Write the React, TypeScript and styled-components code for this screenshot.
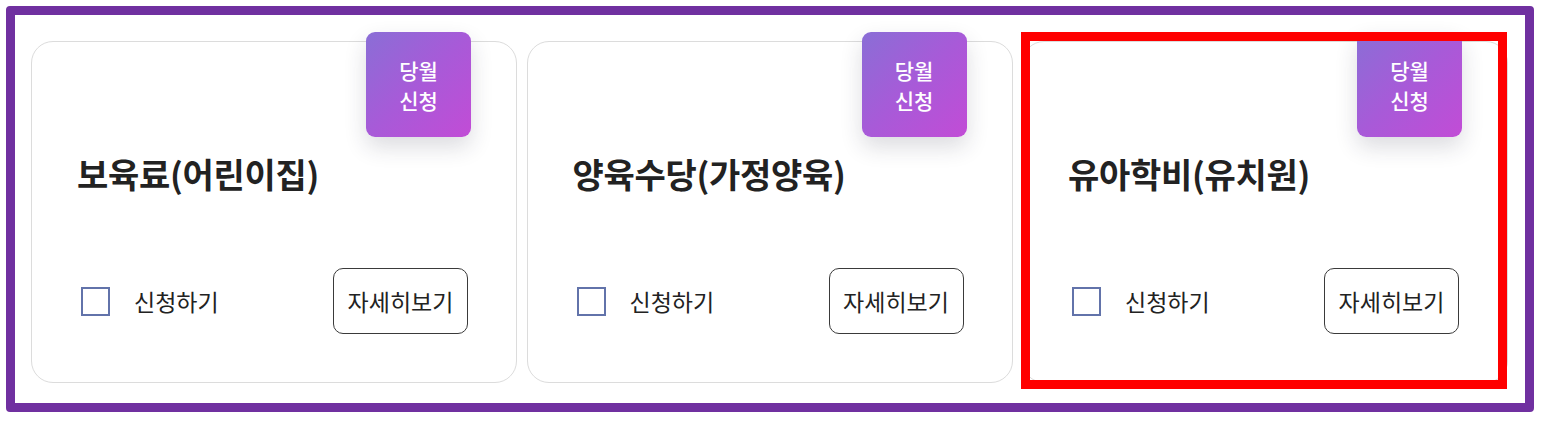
import React from "react";
import styled, { createGlobalStyle } from "styled-components";

const GlobalStyle = createGlobalStyle`
  html, body {
    margin: 0;
    padding: 0;
    background: #ffffff;
    font-family: "Noto Sans CJK KR", "Noto Sans", sans-serif;
    color: #222222;
  }
  *, *::before, *::after { box-sizing: border-box; }
`;

const Frame = styled.div`
  margin: 6px;
  width: 1528px;
  height: 406px;
  border: 9px solid #7030a0;
  border-radius: 4px;
  padding: 26px 17px 20px 16px;
  display: grid;
  grid-template-columns: repeat(3, 1fr);
  column-gap: 9.5px;
`;

const Card = styled.div<{ $highlighted?: boolean }>`
  position: relative;
  height: 342px;
  border: 1px solid #dcdcdc;
  border-radius: 22px;
  background: #ffffff;
  display: flex;
  flex-direction: column;
  justify-content: space-between;
  padding: 110px 48px 48px 45px;

  ${({ $highlighted }) =>
    $highlighted &&
    `
    &::after {
      content: "";
      position: absolute;
      left: -2px;
      top: -10px;
      width: 486px;
      height: 357px;
      border: 9px solid #ff0000;
      pointer-events: none;
    }
  `}
`;

const Badge = styled.div`
  position: absolute;
  top: -10px;
  right: 45px;
  width: 105px;
  height: 105px;
  border-radius: 9px;
  background: linear-gradient(135deg, #8a6ed6 0%, #a85ad8 50%, #c24cd6 100%);
  box-shadow: 0 10px 22px rgba(40, 40, 60, 0.16);
  color: #ffffff;
  display: flex;
  align-items: center;
  justify-content: center;
  text-align: center;
  font-size: 21px;
  line-height: 30px;
  font-weight: 500;
`;

const Title = styled.h2`
  margin: 0;
  font-size: 34px;
  line-height: 44px;
  font-weight: 700;
  letter-spacing: -0.3px;
  color: #222222;
`;

const Footer = styled.div`
  display: flex;
  align-items: center;
  justify-content: space-between;
`;

const CheckLabel = styled.label`
  display: flex;
  align-items: center;
  gap: 24px;
  padding-left: 4px;
  font-size: 23px;
  color: #222222;
`;

const CheckBox = styled.input`
  appearance: none;
  margin: 0;
  width: 29px;
  height: 29px;
  border: 2px solid #6273aa;
  background: #ffffff;
`;

const DetailButton = styled.button`
  width: 135px;
  height: 66px;
  border: 1px solid #3a3a3a;
  border-radius: 10px;
  background: #ffffff;
  font-family: inherit;
  font-size: 23px;
  color: #222222;
  padding: 0;
`;

const items = [
  { title: "보육료(어린이집)", highlighted: false },
  { title: "양육수당(가정양육)", highlighted: false },
  { title: "유아학비(유치원)", highlighted: true },
];

export default function App() {
  return (
    <>
      <GlobalStyle />
      <Frame>
        {items.map((item) => (
          <Card key={item.title} $highlighted={item.highlighted}>
            <Badge>
              당월
              <br />
              신청
            </Badge>
            <Title>{item.title}</Title>
            <Footer>
              <CheckLabel>
                <CheckBox type="checkbox" />
                신청하기
              </CheckLabel>
              <DetailButton type="button">자세히보기</DetailButton>
            </Footer>
          </Card>
        ))}
      </Frame>
    </>
  );
}
